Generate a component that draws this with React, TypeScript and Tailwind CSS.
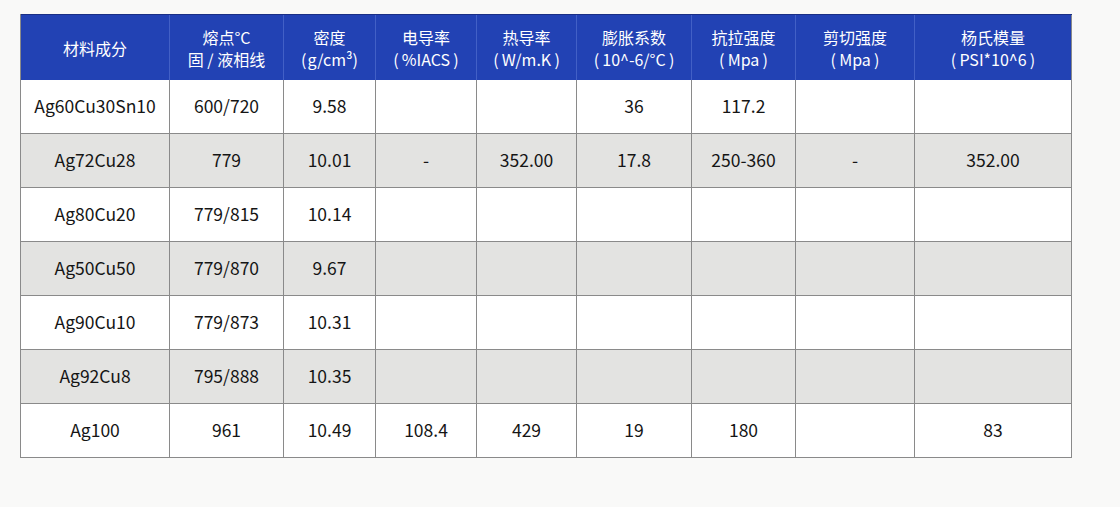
const COLS = "grid-cols-[149px_114px_92px_101px_100px_115px_104px_119px_157px]";

// thin spaces widen the brackets like the printed full-width ones
const headers: string[][] = [
  ["材料成分"],
  ["熔点°C", "固 / 液相线"],
  ["密度", "(\u200ag/cm³)"],
  ["电导率", "(\u2009%IACS\u2009)"],
  ["热导率", "(\u2009W/m.K\u2009)"],
  ["膨胀系数", "(\u200910^-6/°C\u2009)"],
  ["抗拉强度", "(\u2009Mpa\u2009)"],
  ["剪切强度", "(\u2009Mpa\u2009)"],
  ["杨氏模量", "(\u2009PSI*10^6\u2009)"],
];

const rows: string[][] = [
  ["Ag60Cu30Sn10", "600/720", "9.58", "", "", "36", "117.2", "", ""],
  ["Ag72Cu28", "779", "10.01", "-", "352.00", "17.8", "250-360", "-", "352.00"],
  ["Ag80Cu20", "779/815", "10.14", "", "", "", "", "", ""],
  ["Ag50Cu50", "779/870", "9.67", "", "", "", "", "", ""],
  ["Ag90Cu10", "779/873", "10.31", "", "", "", "", "", ""],
  ["Ag92Cu8", "795/888", "10.35", "", "", "", "", "", ""],
  ["Ag100", "961", "10.49", "108.4", "429", "19", "180", "", "83"],
];

export default function App() {
  return (
    <div className="w-[1120px] h-[507px] bg-[#f9f9f8] pt-[14px] pl-[20px] font-['Noto_Sans_CJK_SC','Noto_Sans',sans-serif]">
      <div className="w-fit border-l border-[#8a8a8a]">
        {/* header */}
        <div className={`grid ${COLS} h-[66px] bg-[#2242b4] text-white border-t border-[#1a2f85]`}>
          {headers.map((h, i) => (
            <div
              key={i}
              className="flex flex-col items-center justify-center border-r border-[#4260c6] last:border-[#8a8a8a] text-[16px] leading-[22px] pt-[1px] whitespace-pre"
            >
              {h.map((line, j) => (
                <span key={j}>{line}</span>
              ))}
            </div>
          ))}
        </div>

        {/* body */}
        {rows.map((r, ri) => (
          <div
            key={ri}
            className={`grid ${COLS} h-[54px] border-b border-[#8a8a8a] ${ri % 2 === 1 ? "bg-[#e3e3e1]" : "bg-white"}`}
          >
            {r.map((c, ci) => (
              <div
                key={ci}
                className="flex items-center justify-center border-r border-[#8a8a8a] text-[17.5px] text-[#151515]"
              >
                {c}
              </div>
            ))}
          </div>
        ))}
      </div>
    </div>
  );
}
